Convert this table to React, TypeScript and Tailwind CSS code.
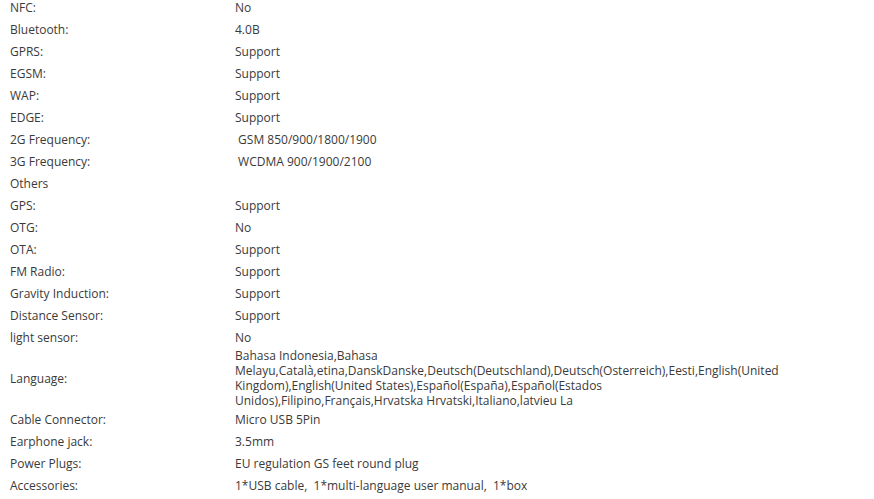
import React from "react";

const rows: [string, string][] = [
  ["NFC:", "No"],
  ["Bluetooth:", "4.0B"],
  ["GPRS:", "Support"],
  ["EGSM:", "Support"],
  ["WAP:", "Support"],
  ["EDGE:", "Support"],
  ["2G Frequency:", "\u00a0GSM 850/900/1800/1900"],
  ["3G Frequency:", "\u00a0WCDMA 900/1900/2100"],
  ["Others", ""],
  ["GPS:", "Support"],
  ["OTG:", "No"],
  ["OTA:", "Support"],
  ["FM Radio:", "Support"],
  ["Gravity Induction:", "Support"],
  ["Distance Sensor:", "Support"],
  ["light sensor:", "No"],
];

const rows2: [string, string][] = [
  ["Cable Connector:", "Micro USB 5Pin"],
  ["Earphone jack:", "3.5mm"],
  ["Power Plugs:", "EU regulation GS feet round plug"],
  ["Accessories:", "1*USB cable,\u00a0 1*multi-language user manual,\u00a0 1*box"],
];

function Row({ label, value }: { label: string; value: string }) {
  return (
    <div className="flex h-[22px] items-center">
      <div className="w-[235px] pl-[10px]">{label}</div>
      <div className="flex-1">{value}</div>
    </div>
  );
}

export default function App() {
  return (
    <div
      className="w-[874px] h-[499px] overflow-hidden bg-white text-[12px] leading-[15px] text-[#3a3a3a]"
      style={{ fontFamily: '"Open Sans", "Noto Sans", sans-serif' }}
    >
      <div className="-mt-[4px]">
        {rows.map(([l, v]) => (
          <Row key={l} label={l} value={v} />
        ))}
        <div className="flex h-[60px] items-center">
          <div className="w-[235px] pl-[10px]">Language:</div>
          <div className="w-[550px]">
            Bahasa Indonesia,Bahasa Melayu,Català,etina,DanskDanske,Deutsch(Deutschland),Deutsch(Osterreich),Eesti,English(United Kingdom),English(United States),Español(España),Español(Estados Unidos),Filipino,Français,Hrvatska Hrvatski,Italiano,latvieu La
          </div>
        </div>
        {rows2.map(([l, v]) => (
          <Row key={l} label={l} value={v} />
        ))}
      </div>
    </div>
  );
}
